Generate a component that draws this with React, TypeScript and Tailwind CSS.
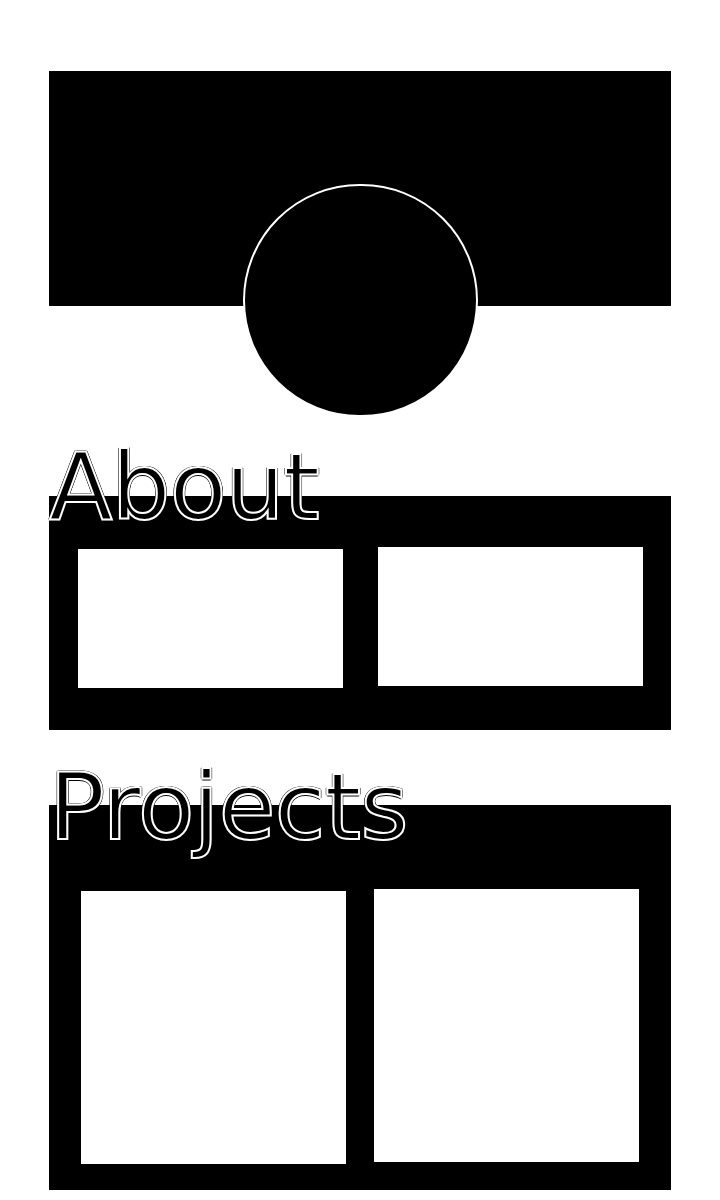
// Profile page: banner with avatar, then "About" and "Projects" sections

const headingClass =
  "relative z-10 font-['DejaVu_Sans',sans-serif] text-[93px] leading-none text-black tracking-[-1px] [-webkit-text-stroke:2px_white] [text-shadow:1.5px_0_0_#000,-1.5px_0_0_#000,0_1.5px_0_#000,0_-1.5px_0_#000,1px_1px_0_#000,-1px_-1px_0_#000,1px_-1px_0_#000,-1px_1px_0_#000]"

function Section({
  title,
  children,
  className,
}: {
  title: string
  children: React.ReactNode
  className: string
}) {
  return (
    <section>
      <h2 className={headingClass}>{title}</h2>
      <div className={`bg-black ${className}`}>{children}</div>
    </section>
  )
}

export default function App() {
  return (
    <div className="min-h-screen bg-white px-[49px] pt-[71px] pb-[10px]">
      {/* banner + avatar */}
      <div className="h-[235px] bg-black" />
      <div className="mx-auto -mt-[122px] h-[233px] w-[235px] rounded-full border-2 border-white bg-black" />

      <div className="mt-[24px]">
        <Section
          title="About"
          className="-mt-[38px] grid grid-cols-2 items-start gap-[35px] pl-[29px] pr-[28px] pt-[53px] pb-[42px]"
        >
          <div className="h-[139px] bg-white" />
          <div className="-mt-[2px] h-[139px] bg-white" />
        </Section>
      </div>

      <div className="mt-[31px]">
        <Section
          title="Projects"
          className="-mt-[49px] grid grid-cols-2 items-start gap-[28px] px-[32px] pt-[84px] pb-[26px]"
        >
          <div className="mt-[2px] h-[273px] bg-white" />
          <div className="h-[273px] bg-white" />
        </Section>
      </div>
    </div>
  )
}
